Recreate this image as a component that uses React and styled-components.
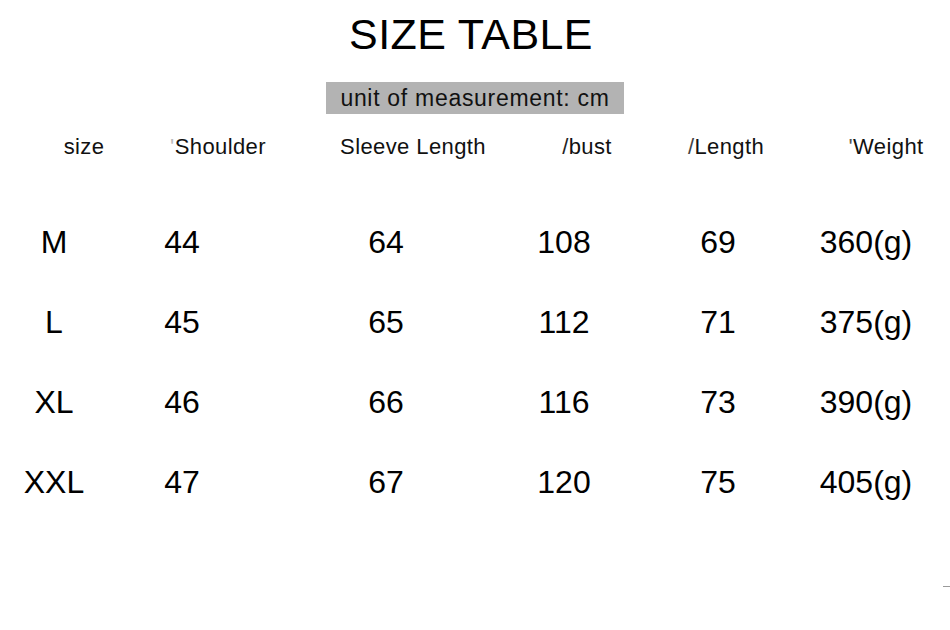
import React from "react";
import styled, { createGlobalStyle } from "styled-components";

const GlobalStyle = createGlobalStyle`
  html, body {
    margin: 0;
    padding: 0;
    background: #fff;
    overflow: hidden;
  }
  body {
    font-family: "Liberation Sans", Arial, Helvetica, sans-serif;
    color: #000;
  }
`;

const Page = styled.div`
  position: relative;
  width: 950px;
  height: 630px;
  display: flex;
  flex-direction: column;
  align-items: center;
  padding-top: 9px;
  box-sizing: border-box;
`;

const Title = styled.h1`
  margin: 0 8px 0 0;
  font-size: 43px;
  line-height: 50px;
  font-weight: 400;
  letter-spacing: 0.4px;
  color: #000;
`;

const UnitBadge = styled.div`
  margin-top: 23px;
  width: 298px;
  height: 32px;
  background: #b3b3b3;
  color: #111;
  font-size: 23px;
  line-height: 32px;
  letter-spacing: 0.7px;
  text-align: center;
`;

const Grid = styled.div`
  align-self: stretch;
  display: grid;
  grid-template-columns: ${(p) => p.$cols};
  padding-left: ${(p) => p.$offset || 0}px;
  margin-top: ${(p) => p.$top || 0}px;
`;

const HeadCell = styled.div`
  justify-self: center;
  white-space: nowrap;
  font-size: 22px;
  line-height: 30px;
  letter-spacing: 0.4px;
  color: #111;
`;

const Tick = styled.span`
  color: ${(p) => p.$color};
`;

const Cell = styled.div`
  justify-self: center;
  white-space: nowrap;
  font-size: 32px;
  line-height: 80px;
  color: #000;
`;

const EdgeMark = styled.span`
  position: absolute;
  right: 0;
  top: 586px;
  width: 7px;
  height: 1px;
  background: #9a9a9a;
`;

const headers = [
  { label: "size" },
  { tick: "'", tickColor: "#bbb", label: "Shoulder" },
  { label: "Sleeve Length" },
  { tick: "/", tickColor: "#222", label: "bust" },
  { tick: "/", tickColor: "#444", label: "Length" },
  { tick: "'", tickColor: "#555", label: "Weight" },
];

const rows = [
  ["M", "44", "64", "108", "69", "360(g)"],
  ["L", "45", "65", "112", "71", "375(g)"],
  ["XL", "46", "66", "116", "73", "390(g)"],
  ["XXL", "47", "67", "120", "75", "405(g)"],
];

export default function App() {
  return (
    <>
      <GlobalStyle />
      <Page>
        <Title>SIZE TABLE</Title>
        <UnitBadge>unit of measurement: cm</UnitBadge>
        <Grid $cols="168px 100px 290px 58px 220px 100px" $top={18}>
          {headers.map((h) => (
            <HeadCell key={h.label}>
              {h.tick && <Tick $color={h.tickColor}>{h.tick}</Tick>}
              {h.label}
            </HeadCell>
          ))}
        </Grid>
        <Grid $cols="92px 164px 244px 112px 196px 100px" $offset={8} $top={40}>
          {rows.map((row) =>
            row.map((v, i) => <Cell key={row[0] + i}>{v}</Cell>)
          )}
        </Grid>
        <EdgeMark />
      </Page>
    </>
  );
}
